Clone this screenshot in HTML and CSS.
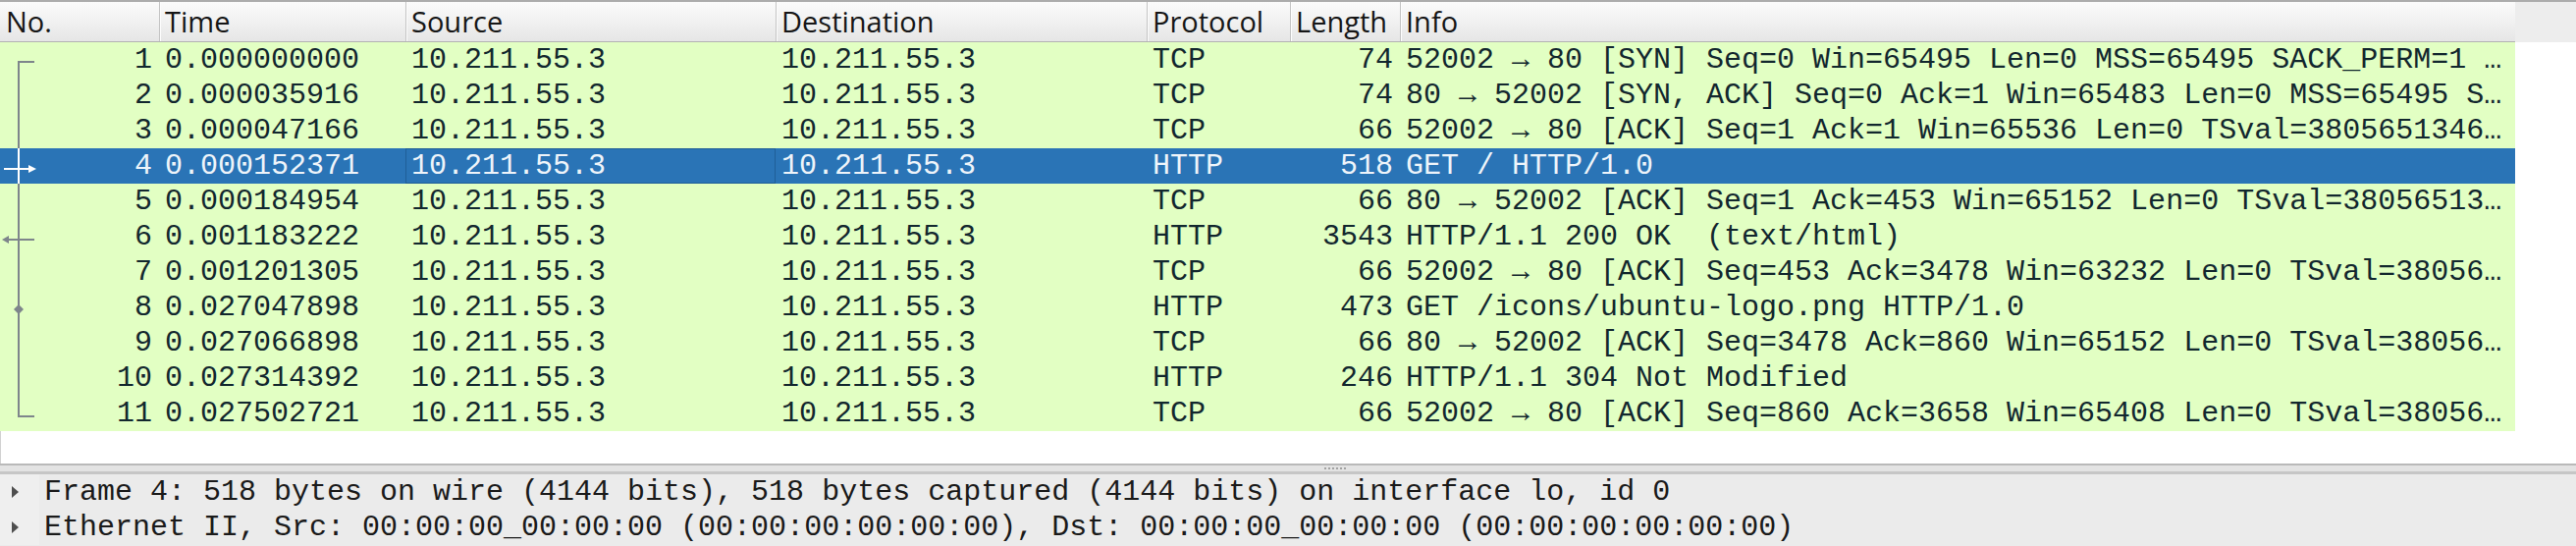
FILE: index.html
```html
<!DOCTYPE html>
<html>
<head>
<meta charset="utf-8">
<title>Packet list</title>
<link rel="stylesheet" href="styles.css">
</head>
<body>
<div class="app">
  <div class="list">
    <div class="hdr-bar">
      <div class="hdr">
        <div class="hc">No.</div>
        <div class="hc">Time</div>
        <div class="hc">Source</div>
        <div class="hc">Destination</div>
        <div class="hc">Protocol</div>
        <div class="hc">Length</div>
        <div class="hc">Info</div>
      </div>
    </div>
    <div class="rows">
      <div class="row">
        <div class="cell c-no"><svg class="tree" width="40" height="36" viewBox="0 0 40 36"><path d="M19 36V20H35" class="ln"/></svg><span>1</span></div>
        <div class="cell">0.000000000</div><div class="cell">10.211.55.3</div><div class="cell">10.211.55.3</div><div class="cell">TCP</div><div class="cell r">74</div>
        <div class="cell">52002 → 80 [SYN] Seq=0 Win=65495 Len=0 MSS=65495 SACK_PERM=1 …</div>
      </div>
      <div class="row">
        <div class="cell c-no"><svg class="tree" width="40" height="36" viewBox="0 0 40 36"><path d="M19 0V36" class="ln"/></svg><span>2</span></div>
        <div class="cell">0.000035916</div><div class="cell">10.211.55.3</div><div class="cell">10.211.55.3</div><div class="cell">TCP</div><div class="cell r">74</div>
        <div class="cell">80 → 52002 [SYN, ACK] Seq=0 Ack=1 Win=65483 Len=0 MSS=65495 S…</div>
      </div>
      <div class="row">
        <div class="cell c-no"><svg class="tree" width="40" height="36" viewBox="0 0 40 36"><path d="M19 0V36" class="ln"/></svg><span>3</span></div>
        <div class="cell">0.000047166</div><div class="cell">10.211.55.3</div><div class="cell">10.211.55.3</div><div class="cell">TCP</div><div class="cell r">66</div>
        <div class="cell">52002 → 80 [ACK] Seq=1 Ack=1 Win=65536 Len=0 TSval=3805651346…</div>
      </div>
      <div class="row sel">
        <div class="cell c-no"><svg class="tree" width="40" height="36" viewBox="0 0 40 36"><path d="M19 0V36M4 21H30" class="ln-w"/><polygon points="29,17 37,21 29,25" class="fill-w"/></svg><span>4</span></div>
        <div class="cell">0.000152371</div><div class="cell focus">10.211.55.3</div><div class="cell">10.211.55.3</div><div class="cell">HTTP</div><div class="cell r">518</div>
        <div class="cell">GET / HTTP/1.0</div>
      </div>
      <div class="row">
        <div class="cell c-no"><svg class="tree" width="40" height="36" viewBox="0 0 40 36"><path d="M19 0V36" class="ln"/></svg><span>5</span></div>
        <div class="cell">0.000184954</div><div class="cell">10.211.55.3</div><div class="cell">10.211.55.3</div><div class="cell">TCP</div><div class="cell r">66</div>
        <div class="cell">80 → 52002 [ACK] Seq=1 Ack=453 Win=65152 Len=0 TSval=38056513…</div>
      </div>
      <div class="row">
        <div class="cell c-no"><svg class="tree" width="40" height="36" viewBox="0 0 40 36"><path d="M19 0V36M8 21H35" class="ln"/><polygon points="9,17 2,21 9,25" class="fill-g"/></svg><span>6</span></div>
        <div class="cell">0.001183222</div><div class="cell">10.211.55.3</div><div class="cell">10.211.55.3</div><div class="cell">HTTP</div><div class="cell r">3543</div>
        <div class="cell">HTTP/1.1 200 OK  (text/html)</div>
      </div>
      <div class="row">
        <div class="cell c-no"><svg class="tree" width="40" height="36" viewBox="0 0 40 36"><path d="M19 0V36" class="ln"/></svg><span>7</span></div>
        <div class="cell">0.001201305</div><div class="cell">10.211.55.3</div><div class="cell">10.211.55.3</div><div class="cell">TCP</div><div class="cell r">66</div>
        <div class="cell">52002 → 80 [ACK] Seq=453 Ack=3478 Win=63232 Len=0 TSval=38056…</div>
      </div>
      <div class="row">
        <div class="cell c-no"><svg class="tree" width="40" height="36" viewBox="0 0 40 36"><path d="M19 0V36" class="ln"/><polygon points="19,15 24,20 19,25 14,20" class="fill-g"/></svg><span>8</span></div>
        <div class="cell">0.027047898</div><div class="cell">10.211.55.3</div><div class="cell">10.211.55.3</div><div class="cell">HTTP</div><div class="cell r">473</div>
        <div class="cell">GET /icons/ubuntu-logo.png HTTP/1.0</div>
      </div>
      <div class="row">
        <div class="cell c-no"><svg class="tree" width="40" height="36" viewBox="0 0 40 36"><path d="M19 0V36" class="ln"/></svg><span>9</span></div>
        <div class="cell">0.027066898</div><div class="cell">10.211.55.3</div><div class="cell">10.211.55.3</div><div class="cell">TCP</div><div class="cell r">66</div>
        <div class="cell">80 → 52002 [ACK] Seq=3478 Ack=860 Win=65152 Len=0 TSval=38056…</div>
      </div>
      <div class="row">
        <div class="cell c-no"><svg class="tree" width="40" height="36" viewBox="0 0 40 36"><path d="M19 0V36" class="ln"/></svg><span>10</span></div>
        <div class="cell">0.027314392</div><div class="cell">10.211.55.3</div><div class="cell">10.211.55.3</div><div class="cell">HTTP</div><div class="cell r">246</div>
        <div class="cell">HTTP/1.1 304 Not Modified</div>
      </div>
      <div class="row">
        <div class="cell c-no"><svg class="tree" width="40" height="36" viewBox="0 0 40 36"><path d="M19 0V21H35" class="ln"/></svg><span>11</span></div>
        <div class="cell">0.027502721</div><div class="cell">10.211.55.3</div><div class="cell">10.211.55.3</div><div class="cell">TCP</div><div class="cell r">66</div>
        <div class="cell">52002 → 80 [ACK] Seq=860 Ack=3658 Win=65408 Len=0 TSval=38056…</div>
      </div>
    </div>
    <div class="empty"></div>
  </div>
  <div class="splitter"><span class="grip"><i></i><i></i><i></i><i></i><i></i><i></i></span></div>
  <div class="detail">
    <div class="drow">
      <div class="branch"><svg width="9" height="14" viewBox="0 0 9 14"><polygon points="1,1 8,7 1,13" class="tri"/></svg></div>
      <div class="dtext">Frame 4: 518 bytes on wire (4144 bits), 518 bytes captured (4144 bits) on interface lo, id 0</div>
    </div>
    <div class="drow">
      <div class="branch"><svg width="9" height="14" viewBox="0 0 9 14"><polygon points="1,1 8,7 1,13" class="tri"/></svg></div>
      <div class="dtext">Ethernet II, Src: 00:00:00_00:00:00 (00:00:00:00:00:00), Dst: 00:00:00_00:00:00 (00:00:00:00:00:00)</div>
    </div>
  </div>
</div>
</body>
</html>
```

FILE: styles.css
```css
* { box-sizing: border-box; }
html, body { margin: 0; padding: 0; background: #ffffff; }
body { width: 2624px; height: 556px; overflow: hidden; }

.app { display: flex; flex-direction: column; height: 556px; }

.list {
  display: flex;
  flex-direction: column;
  height: 472px;
  border-top: 2px solid #acacac;
  background: #ffffff;
}

.hdr-bar { display: flex; height: 41px; background: #ededed; flex: none; }

.hdr {
  display: grid;
  grid-template-columns: 162px 251px 377px 378px 146px 112px 1136px;
  width: 2562px;
  height: 41px;
  background: linear-gradient(#fbfbfb, #e6e6e6);
  border-bottom: 1px solid #b3b3b3;
  font-family: "Open Sans", "Noto Sans", sans-serif;
  font-size: 29px;
  color: #161616;
}

.hc {
  padding-left: 5px;
  line-height: 40px;
  border-left: 1px solid #c4c4c4;
  box-shadow: inset 1px 0 0 #fdfdfd;
  white-space: nowrap;
  overflow: hidden;
}
.hc:first-child { border-left: none; box-shadow: none; padding-left: 6px; }

.rows { width: 2562px; background: #e2ffc3; flex: none; }

.row {
  display: grid;
  grid-template-columns: 162px 251px 377px 378px 146px 112px 1136px;
  height: 36px;
  font-family: "Liberation Mono", "DejaVu Sans Mono", monospace;
  font-size: 30px;
  line-height: 36px;
  color: #12272e;
}

.cell {
  padding: 0 7px 0 6px;
  white-space: pre;
  overflow: hidden;
}
.r { text-align: right; }

.c-no {
  display: flex;
  justify-content: space-between;
  padding: 0 7px 0 0;
}
.tree { display: block; flex: none; }
.ln { fill: none; stroke: #7e858b; stroke-width: 2; }
.ln-w { fill: none; stroke: #ffffff; stroke-width: 2; }
.fill-w { fill: #ffffff; }
.fill-g { fill: #7e858b; }

.row.sel { background: #2a74b6; color: #eef4fa; }
.row.sel .focus { box-shadow: inset 0 0 0 1px #1f5e97; }

.empty { flex: 1; border-left: 1px solid #d2d2d2; }

.splitter {
  height: 11px;
  flex: none;
  background: #e3e3e3;
  border-top: 2px solid #b9b9b9;
  border-bottom: 3px solid #c6c6c6;
  display: flex;
  align-items: center;
  padding-left: 1349px;
}
.grip { display: flex; gap: 2px; }
.grip i { display: block; width: 2px; height: 2px; background: #a2a2a2; }

.detail { height: 73px; flex: none; background: #ebebeb; }

.drow { display: flex; height: 36px; align-items: center; }
.branch {
  width: 40px;
  height: 36px;
  flex: none;
  display: flex;
  align-items: center;
  padding-left: 11px;
  background: #efefef;
}
.branch svg { display: block; }
.tri { fill: #4e4e4e; }

.dtext {
  padding-left: 5px;
  font-family: "Liberation Mono", "DejaVu Sans Mono", monospace;
  font-size: 30px;
  line-height: 36px;
  color: #1a1a1a;
  white-space: pre;
}
```
